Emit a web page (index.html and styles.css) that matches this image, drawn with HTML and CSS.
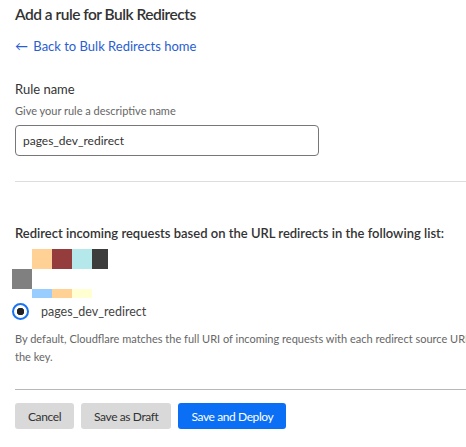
FILE: index.html
```html
<!DOCTYPE html>
<html>
<head>
<meta charset="utf-8">
<link rel="stylesheet" href="styles.css">
</head>
<body>
<div class="page">
  <h1 class="title">Add a rule for Bulk Redirects</h1>
  <a class="back" href="#"><span class="arrow">&larr;</span> Back to Bulk Redirects home</a>

  <div class="field">
    <div class="label">Rule name</div>
    <div class="help">Give your rule a descriptive name</div>
    <div class="input">pages_dev_redirect</div>
  </div>

  <div class="divider light"></div>

  <div class="section-title">Redirect incoming requests based on the URL redirects in the following list:</div>

  <div class="pixels">
    <div class="prow r1">
      <span class="px w20"></span>
      <span class="px c-peach w20"></span>
      <span class="px c-red w20"></span>
      <span class="px c-cyan w20"></span>
      <span class="px c-dark w16"></span>
    </div>
    <div class="prow r2">
      <span class="px c-grey w20"></span>
    </div>
    <div class="prow r3">
      <span class="px w20"></span>
      <span class="px c-blue w20"></span>
      <span class="px c-peach w20"></span>
      <span class="px c-yellow w20"></span>
    </div>
  </div>

  <label class="radio">
    <span class="radio-dot"></span>
    <span class="radio-label">pages_dev_redirect</span>
  </label>

  <p class="desc"><span class="desc-line">By default, Cloudflare matches the full URI of incoming requests with each redirect source URL in the list, using</span><br>the key.</p>

  <div class="divider dark"></div>

  <div class="actions">
    <button class="btn grey">Cancel</button>
    <button class="btn grey">Save as Draft</button>
    <button class="btn primary">Save and Deploy</button>
  </div>
</div>
</body>
</html>
```

FILE: styles.css
```css
html, body {
  margin: 0;
  padding: 0;
  background: #fff;
  overflow: hidden;
}
body {
  font-family: Lato, "Noto Sans", sans-serif;
  color: #333;
}
.page {
  width: 600px;
  padding: 0 0 0 15px;
}
.title {
  margin: 2px 0 0 0;
  font-size: 15.5px;
  font-weight: 600;
  letter-spacing: -0.5px;
  line-height: 24px;
  color: #333;
}
.back {
  display: block;
  margin-top: 11px;
  font-size: 13px;
  line-height: 18px;
  color: #2a5ed0;
  text-decoration: none;
}
.arrow {
  display: inline-block;
  margin-right: 2px;
}
.field {
  margin-top: 25px;
}
.label {
  font-size: 13px;
  line-height: 18px;
  color: #333;
}
.help {
  margin-top: 5px;
  font-size: 11px;
  line-height: 16px;
  color: #666;
}
.input {
  box-sizing: border-box;
  margin-top: 6px;
  width: 304px;
  height: 31px;
  border: 1px solid #777;
  border-radius: 4px;
  padding: 0 7px;
  font-size: 12px;
  line-height: 29px;
  color: #333;
}
.divider {
  height: 1px;
}
.divider.light {
  margin-top: 25px;
  background: #ddd;
}
.divider.dark {
  margin-top: 23px;
  background: #b8b8b8;
}
.section-title {
  margin-top: 42px;
  font-size: 13px;
  font-weight: 600;
  line-height: 18px;
  color: #333;
}
.pixels {
  margin-top: 7px;
  margin-left: -3px;
}
.prow {
  display: flex;
}
.prow.r1, .prow.r2 { height: 20px; }
.prow.r3 { height: 9px; }
.px { display: block; height: 100%; }
.w20 { width: 20px; }
.w16 { width: 16px; }
.c-peach { background: #ffd194; }
.c-red { background: #953c3c; }
.c-cyan { background: #b4e8ea; }
.c-dark { background: #3c3c3c; }
.c-grey { background: #808080; }
.c-blue { background: #99ccff; }
.c-yellow { background: #ffffd2; }
.radio {
  display: flex;
  align-items: center;
  margin-top: 3px;
  margin-left: -3px;
  height: 20px;
}
.radio-dot {
  box-sizing: border-box;
  width: 17px;
  height: 17px;
  border-radius: 50%;
  border: 2px solid #1a73f0;
  background: radial-gradient(circle, #222 0 3.5px, #fff 4px);
  box-shadow: inset 0 0 0 2px #fff;
}
.radio-label {
  margin-left: 12px;
  font-size: 12.5px;
  color: #444;
}
.desc {
  margin: 9px 0 0 0;
  font-size: 11px;
  line-height: 18px;
  color: #666;
}
.desc-line {
  white-space: nowrap;
}
.actions {
  display: flex;
  gap: 7px;
  margin-top: 13px;
}
.btn {
  height: 26px;
  border: none;
  border-radius: 3px;
  padding: 0 13px;
  font-family: inherit;
  font-size: 12px;
  letter-spacing: -0.4px;
  cursor: pointer;
}
.btn.grey {
  background: #d9d9d9;
  color: #333;
}
.btn.primary {
  background: #0a6ff5;
  color: #fff;
}
```
